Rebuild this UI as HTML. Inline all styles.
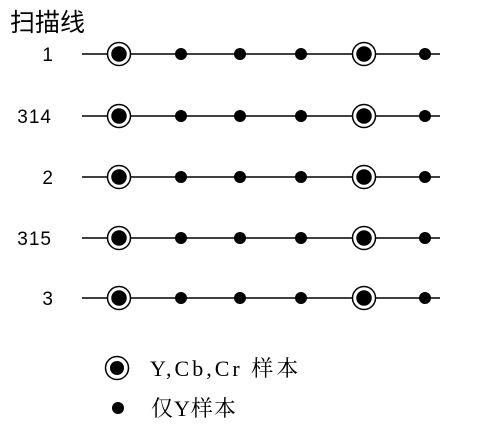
<!DOCTYPE html><html><head><meta charset="utf-8"><style>body{margin:0;background:#fff;width:490px;height:441px;overflow:hidden}</style></head><body>
<svg width="490" height="441" xmlns="http://www.w3.org/2000/svg">
<g font-family="Liberation Sans, Noto Sans CJK SC, sans-serif" font-size="19" fill="#000">
<text x="10" y="31" font-size="25">扫描线</text>
<text x="53" y="61" text-anchor="end">1</text>
<text x="52" y="123" text-anchor="end" letter-spacing="1">314</text>
<text x="53" y="184" text-anchor="end">2</text>
<text x="52" y="245" text-anchor="end" letter-spacing="1">315</text>
<text x="53" y="305" text-anchor="end">3</text>
</g>
<g font-family="Liberation Serif, Noto Serif CJK SC, serif" font-size="22" fill="#000">
<text x="150" y="376" letter-spacing="3">Y,Cb,Cr 样本</text>
<text x="151" y="416" letter-spacing="1">仅Y样本</text>
</g>
<g id="r" stroke="#000" stroke-width="1.5">
<line x1="82" y1="54" x2="440" y2="54"/>
<circle cx="119" cy="54" r="11.5" fill="#fff"/><circle cx="119" cy="54" r="7" fill="#000"/>
<circle cx="364" cy="54" r="11.5" fill="#fff"/><circle cx="364" cy="54" r="7" fill="#000"/>
<g stroke="none" fill="#000"><circle cx="181" cy="54" r="6"/><circle cx="240" cy="54" r="6"/><circle cx="301" cy="54" r="6"/><circle cx="425" cy="54" r="6"/></g>
</g>
<use href="#r" y="62"/><use href="#r" y="123"/><use href="#r" y="184"/><use href="#r" y="244"/>
<circle cx="117" cy="368" r="11.5" fill="#fff" stroke="#000" stroke-width="1.5"/><circle cx="117" cy="368" r="7"/>
<circle cx="118" cy="408" r="6"/>
</svg></body></html>
